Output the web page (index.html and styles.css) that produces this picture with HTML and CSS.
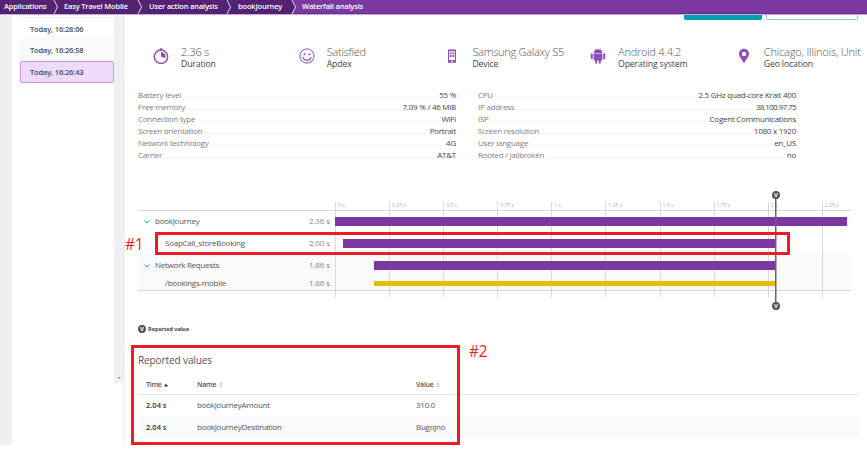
FILE: index.html
```html
<!doctype html>
<html lang="en">
<head>
    <meta charset="UTF-8">
    <title>Waterfall analysis</title>
    <link rel="stylesheet" href="styles.css">
</head>
<body>
<!-- breadcrumb -->
<nav class="crumbs">
    <a class="crumb c1">Applications</a>
    <svg class="sep" viewBox="0 0 6 14"><path d="M1 0L4.5 7L1 14"/></svg>
    <a class="crumb c2">Easy Travel Mobile</a>
    <svg class="sep" viewBox="0 0 6 14"><path d="M1 0L4.5 7L1 14"/></svg>
    <a class="crumb c3">User action analysis</a>
    <svg class="sep" viewBox="0 0 6 14"><path d="M1 0L4.5 7L1 14"/></svg>
    <a class="crumb c4">bookJourney</a>
    <svg class="sep last" viewBox="0 0 6 14"><path class="fill" d="M0 0H1L4.5 7L1 14H0Z"/><path d="M1 0L4.5 7L1 14"/></svg>
    <a class="crumb current">Waterfall analysis</a>
</nav>
<div class="page">
    <div class="gutter"></div>
    <!-- user action list -->
    <div class="sidebar">
        <ul class="times">
            <li>Today, 16:28:06</li>
            <li class="even">Today, 16:26:58</li>
            <li class="selected">Today, 16:26:43</li>
        </ul>
        <div class="scrollbar"><span class="down"></span></div>
    </div>
    <div class="content">
        <div class="buttons">
            <span class="btn primary"></span>
            <span class="btn"></span>
        </div>
        <!-- key facts -->
        <div class="facts">
            <div class="fact">
                <svg class="icon" viewBox="0 0 16 16"><circle cx="8" cy="8.7" r="6.7" fill="none" stroke="#8f4db8" stroke-width="1.4"/><path d="M6.8 .3h2.4v1.6H6.8z"/><path d="M8 8.7V4.1A4.6 4.6 0 0 1 12.5 10z"/></svg>
                <div><b>2.36 s</b><span>Duration</span></div>
            </div>
            <div class="fact">
                <svg class="icon" viewBox="0 0 16 16"><g fill="none" stroke="#8f4db8"><circle cx="8" cy="8" r="7.1"/><path d="M3.8 9.2C5 13.4 11 13.4 12.2 9.2" stroke-width="1.2"/></g><circle cx="5.5" cy="6.2" r="1"/><circle cx="10.5" cy="6.2" r="1"/></svg>
                <div><b>Satisfied</b><span>Apdex</span></div>
            </div>
            <div class="fact">
                <svg class="icon" viewBox="0 0 16 16"><path fill-rule="evenodd" d="M4.600 1.600h6.800q.6 0 .6.6v12q0 .6-.6.6H4.600q-.6 0-.6-.6v-12q0-.6.6-.6zM5 3.200v8.800h6V3.200zM7.200 12.800v1.100h1.600v-1.100z"/><path d="M5.8 4.5h1.8v1.8H5.8zM8.5 4.5h1.8v1.8H8.5zM5.8 7.1h1.8v1.8H5.8zM8.5 7.1h1.8v1.8H8.5z"/></svg>
                <div><b>Samsung Galaxy S5</b><span>Device</span></div>
            </div>
            <div class="fact">
                <svg class="icon" viewBox="0 0 16 16"><path d="M3.6 4.9Q3.8 2.6 5.9 1.6L5.2.4l.4-.2.8 1.2Q8 1 9.6 1.4L10.4.2l.4.2-.7 1.2Q12.2 2.6 12.4 4.9zM3.6 5.5h8.8v6q0 1-1 1h-.6v2.3q0 1-1 1t-1-1v-2.3H7.2v2.3q0 1-1 1t-1-1v-2.3h-.6q-1 0-1-1z"/><rect x=".8" y="5.3" width="2" height="6" rx="1"/><rect x="13.2" y="5.3" width="2" height="6" rx="1"/></svg>
                <div><b>Android 4.4.2</b><span>Operating system</span></div>
            </div>
            <div class="fact">
                <svg class="icon" viewBox="0 0 16 16"><path fill-rule="evenodd" d="M8 .8a5 5 0 0 1 5 5C13 9.200 9.500 12 8 15.600 6.500 12 3 9.200 3 5.800a5 5 0 0 1 5-5zM8 3.700a2.200 2.200 0 1 0 0 4.400a2.200 2.200 0 1 0 0-4.400z"/></svg>
                <div><b class="place">Chicago, Illinois, Unit</b><span>Geo location</span></div>
            </div>
        </div>
        <!-- session properties -->
        <div class="props">
            <dl>
                <div><dt>Battery level</dt><i></i><dd>55 %</dd></div>
                <div><dt>Free memory</dt><i></i><dd>7.09 % / 46 MiB</dd></div>
                <div><dt>Connection type</dt><i></i><dd>WiFi</dd></div>
                <div><dt>Screen orientation</dt><i></i><dd>Portrait</dd></div>
                <div><dt>Network technology</dt><i></i><dd>4G</dd></div>
                <div><dt>Carrier</dt><i></i><dd>AT&amp;T</dd></div>
            </dl>
            <dl>
                <div><dt>CPU</dt><i></i><dd>2.5 GHz quad-core Krait 400</dd></div>
                <div><dt>IP address</dt><i></i><dd class="ip">38.100.97.75</dd></div>
                <div><dt>ISP</dt><i></i><dd>Cogent Communications</dd></div>
                <div><dt>Screen resolution</dt><i></i><dd>1080 x 1920</dd></div>
                <div><dt>User language</dt><i></i><dd>en_US</dd></div>
                <div><dt>Rooted / jailbroken</dt><i></i><dd>no</dd></div>
            </dl>
        </div>
        <!-- waterfall chart -->
        <div class="waterfall">
            <div class="axis">
                <span>0 s</span><span>0.25 s</span><span>0.5 s</span><span>0.75 s</span><span>1 s</span><span>1.25 s</span><span>1.5 s</span><span>1.75 s</span><span>2 s</span><span>2.25 s</span>
            </div>
            <div class="rows">
                <div class="row">
                    <svg class="arrow" viewBox="0 0 6 4"><path d="M.5 .7L3 3L5.500 .7"/></svg>
                    <span class="name">bookJourney</span><span class="dur">2.36 s</span>
                    <div class="track"><div class="bar" style="margin-left: 0; width: 511.500px"></div></div>
                </div>
                <div class="row">
                    <span class="name child">SoapCall_storeBooking</span><span class="dur">2.00 s</span>
                    <div class="track"><div class="bar" style="margin-left: 7.500px; width: 433px"></div></div>
                </div>
                <div class="row shade">
                    <svg class="arrow" viewBox="0 0 6 4"><path d="M.5 .7L3 3L5.500 .7"/></svg>
                    <span class="name">Network Requests</span><span class="dur">1.86 s</span>
                    <div class="track"><div class="bar" style="margin-left: 39px; width: 401.500px"></div></div>
                </div>
                <div class="row shade small">
                    <span class="name child">/bookings-mobile</span><span class="dur">1.86 s</span>
                    <div class="track"><div class="bar request" style="margin-left: 39px; width: 401.500px"></div></div>
                </div>
            </div>
            <div class="marker"><span class="dot">V</span><span class="dot">V</span></div>
            <div class="callout first"></div>
            <div class="callout-label one">#1</div>
        </div>
        <div class="legend"><span class="dot">V</span>Reported value</div>
        <!-- reported values -->
        <div class="values">
            <h2>Reported values</h2>
            <table>
                <tr><th class="time">Time <svg class="sort" viewBox="0 0 4 6"><path fill="#333" d="M0 4.500L2 1.500L4 4.500z"/></svg></th><th class="key">Name <svg class="sort" viewBox="0 0 4 6"><path d="M.4 2.400L2 .5L3.600 2.400zM.4 3.600L2 5.500L3.600 3.600z"/></svg></th><th>Value <svg class="sort" viewBox="0 0 4 6"><path d="M.4 2.400L2 .5L3.600 2.400zM.4 3.600L2 5.500L3.600 3.600z"/></svg></th></tr>
                <tr><td class="time">2.04 s</td><td>bookJourneyAmount</td><td>310.0</td></tr>
                <tr class="shade"><td class="time">2.04 s</td><td>bookJourneyDestination</td><td>Bugojno</td></tr>
            </table>
            <div class="callout second"></div>
            <div class="callout-label two">#2</div>
        </div>
    </div>
</div>
</body>
</html>
```
FILE: styles.css
```css
* {
    margin: 0;
    padding: 0;
    box-sizing: border-box;
}

body {
    width: 867px;
    height: 455px;
    overflow: hidden;
    background: #fff;
    color: #555;
    font: 8px/12px "Open Sans", "Noto Sans", sans-serif;
    letter-spacing: -0.25px;
}

.crumbs {
    display: flex;
    height: 15px;
    background: #7c38a1;
    border-bottom: 1px solid #c9a9dc;
    box-shadow: inset 0 -1px #6b2c91;
    color: #fff;
    font-size: 7.5px;
    font-weight: 600;
    letter-spacing: -0.17px;
    white-space: nowrap;
}

.crumb {
    height: 14px;
    background: #522273;
}

.c1 {
    width: 53px;
    padding-left: 4px;
}

.c2 {
    width: 78px;
    padding-left: 5px;
}

.c3 {
    width: 83px;
    padding-left: 6px;
}

.c4 {
    width: 59px;
    padding-left: 6px;
}

.crumb.current {
    padding-left: 5px;
    background: none;
}

.sep {
    width: 6px;
    height: 14px;
    background: #522273;
    fill: none;
    stroke: #e3d5ec;
}

.sep.last {
    background: none;
}

.sep .fill {
    fill: #522273;
    stroke: none;
}

.page {
    display: flex;
    height: 430px;
}

.gutter {
    width: 12px;
    background: #f0f0f0;
}

.sidebar {
    display: flex;
    width: 112px;
    padding-left: 8px;
}

.times {
    width: 94px;
    padding-top: 2px;
    list-style: none;
}

.times li {
    height: 22px;
    padding-left: 10px;
    font-size: 7.5px;
    line-height: 22px;
    font-weight: 600;
    letter-spacing: -0.15px;
    color: #4c4c4c;
}

.times li:first-child {
    border-top: 1px solid #eee;
    line-height: 22px;
}

.times .even {
    background: #fafafa;
}

.times .selected {
    border: 1px solid #c59ade;
    border-radius: 2px;
    padding-left: 9px;
    line-height: 20px;
    background: #eedbfb;
}

.scrollbar {
    display: flex;
    align-items: flex-end;
    justify-content: center;
    width: 10px;
    height: 367px;
    margin-top: 1px;
    padding-bottom: 4px;
    background: #f0f0f0;
}

.down {
    border: 2px solid transparent;
    border-top-color: #999;
    border-bottom: 0;
}

.content {
    flex: 1;
    padding-left: 13px;
    border-left: 1px solid #eee;
}

.buttons {
    display: flex;
    justify-content: flex-end;
    gap: 4px;
    height: 5px;
    padding-right: 9px;
}

.btn {
    width: 92px;
    border: 1px solid #7fcfd8;
    border-top: 0;
    border-radius: 0 0 2px 2px;
}

.btn.primary {
    width: 78px;
    background: #00a1b2;
    border-color: #00a1b2;
}

.facts {
    display: grid;
    grid-template-columns: repeat(5, 145.7px);
    width: 729px;
    height: 69px;
    padding-top: 25px;
}

.fact {
    display: flex;
    white-space: nowrap;
}

.icon {
    width: 16px;
    height: 16px;
    margin: 3px 12px 0 15px;
    fill: #8f4db8;
    flex: none;
}

.fact b {
    display: block;
    height: 13px;
    font-size: 11px;
    font-weight: 300;
    line-height: 14px;
    letter-spacing: -0.26px;
    color: #555;
}

.fact .place {
    letter-spacing: -0.17px;
}

.fact span {
    display: block;
    font-size: 8.7px;
    line-height: 12px;
    letter-spacing: -0.14px;
    color: #444;
}

.props {
    display: flex;
    gap: 22px;
    height: 113px;
}

.props dl {
    width: 318px;
}

.props dl div {
    display: flex;
    height: 12.1px;
}

.props dt {
    color: #808080;
}

.props i {
    flex: 1;
    height: 9px;
    margin: 0 3px;
    border-bottom: 1px solid #f3f3f3;
}

.props dd {
    color: #454545;
}

.props .ip {
    letter-spacing: -0.6px;
}

.waterfall {
    position: relative;
    width: 713px;
    height: 119px;
}

/* vertical lines run down behind the rows */
.axis {
    display: grid;
    grid-template-columns: repeat(10, 54.1px);
    height: 8px;
    padding-left: 197px;
}

.axis span {
    height: 95px;
    padding-left: 2px;
    border-left: 1px solid #d9d9d9;
    font-size: 5px;
    line-height: 6px;
    letter-spacing: 0;
    color: #aaa;
}

.rows {
    border-top: 1px solid #d9d9d9;
    border-bottom: 1px solid #d9d9d9;
}

.row {
    display: flex;
    align-items: center;
    height: 22px;
    padding-bottom: 1px;
}

.row.small {
    height: 13px;
    padding-bottom: 0;
}

.shade {
    background: rgba(0, 0, 0, 0.02);
}

.arrow {
    width: 6px;
    height: 4px;
    margin: 0 -12px 0 6px;
    fill: none;
    stroke: #00b4c5;
}

.name {
    width: 150px;
    margin-bottom: 2px;
    padding-left: 17px;
}

/* the arrow takes no room of its own */
.arrow + .name {
    padding-left: 17px;
    width: 150px;
}

.name.child {
    padding-left: 27px;
}

.dur {
    width: 48px;
    margin: 0 5px 2px -6px;
    text-align: right;
    letter-spacing: -0.1px;
    color: #888;
}

.bar {
    height: 9px;
    background: #7c38a1;
}

.bar.request {
    height: 5px;
    background: #e6be00;
}

.marker {
    position: absolute;
    display: flex;
    flex-direction: column;
    justify-content: space-between;
    left: 634px;
    top: -11px;
    width: 8px;
    height: 119px;
    background: linear-gradient(#666, #666) center / 1.5px 100% no-repeat;
}

.dot {
    width: 8px;
    height: 8px;
    border-radius: 50%;
    background: #555;
    color: #fff;
    font-size: 6px;
    font-weight: 700;
    line-height: 8px;
    letter-spacing: 0;
    text-align: center;
}

.callout {
    position: absolute;
    border: 3px solid #ed1c24;
}

.callout.first {
    left: 17px;
    top: 30px;
    width: 635px;
    height: 23px;
}

.callout-label {
    position: absolute;
    font: 15.5px/18px "Open Sans", sans-serif;
    color: #ed1c24;
}

.one {
    left: -13px;
    top: 33px;
}

.legend {
    display: flex;
    align-items: center;
    gap: 2px;
    height: 16px;
    font-size: 5.5px;
    font-weight: 700;
    letter-spacing: -0.05px;
    color: #444;
}

.values {
    position: relative;
    width: 721px;
    padding-top: 15px;
}

.values h2 {
    font-size: 10px;
    font-weight: 400;
    line-height: 16px;
    letter-spacing: -0.1px;
}

table {
    width: 100%;
    margin-top: 8px;
    border-collapse: collapse;
    table-layout: fixed;
}

th, td {
    height: 22px;
    text-align: left;
}

th {
    height: 18px;
    border-bottom: 1px solid #e6e6e6;
    font-size: 7px;
    font-weight: 600;
}

.time {
    width: 59px;
    padding-left: 8px;
}

.key {
    width: 219px;
}

td.time {
    font-size: 7.5px;
    font-weight: 600;
    letter-spacing: 0;
    color: #333;
}

.sort {
    width: 4px;
    height: 6px;
    margin-left: 1px;
    vertical-align: -1px;
    fill: #bbb;
}

.callout.second {
    left: -7px;
    top: 8px;
    width: 329px;
    height: 100px;
}

.two {
    left: 331px;
    top: 5px;
}
```
